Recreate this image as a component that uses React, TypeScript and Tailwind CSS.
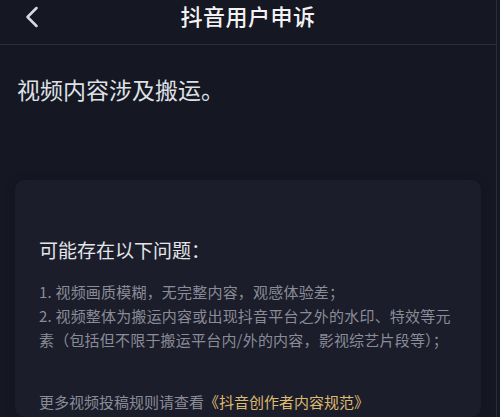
import { ChevronLeft } from "lucide-react";

const font = { fontFamily: '"Noto Sans CJK SC", "Noto Sans", sans-serif' };

export default function App() {
  return (
    <div className="w-[500px] h-[417px] overflow-hidden bg-[#151722] flex" style={font}>
      <div className="w-[497px] h-full border-r border-[#2a2c3a] flex flex-col">
        {/* Header */}
        <div className="relative h-[45px] shrink-0 border-b border-[#2b2d39] flex items-start justify-center pt-[2px]">
          <ChevronLeft
            className="absolute left-[14px] top-[-1px] text-[#d8d9de]"
            size={36}
            strokeWidth={1.7}
          />
          <div className="text-[22px] leading-[26px] font-medium text-[#f2f2f4] tracking-[0.5px]">
            抖音用户申诉
          </div>
        </div>

        {/* Reason */}
        <div className="px-[17px] pt-[30px] text-[23px] leading-[28px] text-[#dfe0e5]">
          视频内容涉及搬运。
        </div>

        {/* Card */}
        <div className="mx-[15px] mt-[77px] flex-1 rounded-[10px] bg-[#1b1d2a] shadow-[0_0_6px_2px_rgba(20,22,34,0.9)] pl-[24px] pr-[28px] pt-[58px]">
          <div className="text-[19px] leading-[24px] text-[#e4e5ea]">可能存在以下问题：</div>
          <div className="mt-[18px] text-[15px] leading-[24px] tracking-[0.2px] text-[#8a8c97]">
            <p>1. 视频画质模糊，无完整内容，观感体验差；</p>
            <p>2. 视频整体为搬运内容或出现抖音平台之外的水印、特效等元素（包括但不限于搬运平台内/外的内容，影视综艺片段等）；</p>
          </div>
          <div className="mt-[38px] text-[15px] leading-[23px] text-[#8a8c97]">
            更多视频投稿规则请查看<span className="text-[#dcbb6f]">《抖音创作者内容规范》</span>
          </div>
        </div>
      </div>
    </div>
  );
}
